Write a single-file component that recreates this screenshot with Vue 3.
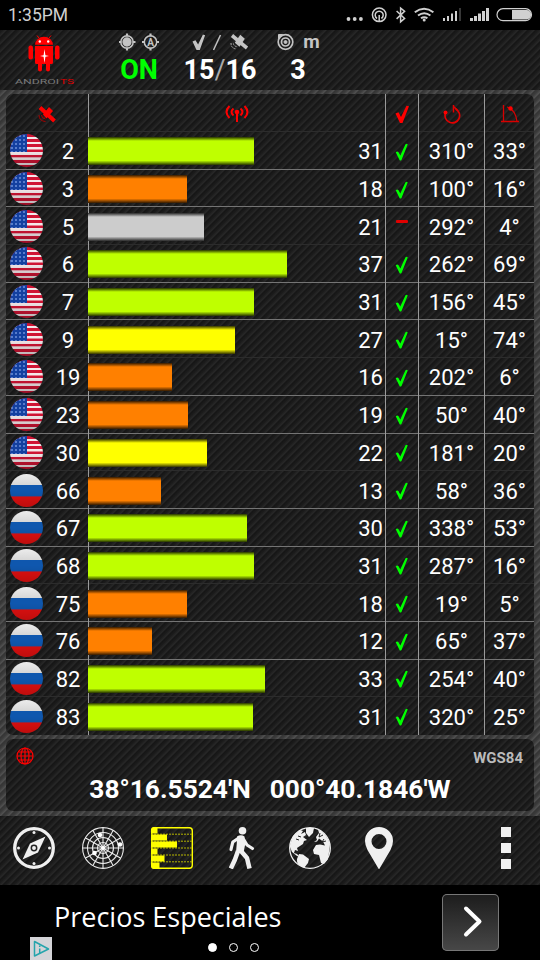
<template>
  <div class="screen">
    <div class="status">
      <span class="time">1:35PM</span>
      <svg width="195" height="30" viewBox="345 0 195 30">
        <g fill="#d0d0d0">
          <circle cx="348.5" cy="19" r="1.9" />
          <circle cx="354.7" cy="19" r="1.9" />
          <circle cx="360.9" cy="19" r="1.9" />
        </g>
        <g fill="none" stroke="#d0d0d0" stroke-width="1.5">
          <circle cx="379.2" cy="14.8" r="6.8" />
          <path d="M377 18.5a4 4 0 1 1 4.4 0M379.2 15v7" />
          <path d="M396.6 11l8 7.4-4 3.4V8l4 3.3-8 7.6" />
        </g>
        <g fill="none" stroke="#d0d0d0" stroke-width="2">
          <path d="M414.8 12.3q9.3-7 18.6 0M418 15.5q6.2-4.6 12.4 0M421 18.3q3.2-2.3 6.4 0" />
        </g>
        <circle cx="424.2" cy="20" r="1.5" fill="#d0d0d0" />
        <g fill="#d0d0d0">
          <rect x="443" y="18" width="2" height="3" />
          <rect x="447" y="16" width="2" height="5" />
          <rect x="451" y="13.5" width="2" height="7.5" />
          <rect x="455" y="11" width="2" height="10" />
          <rect x="459" y="8" width="2" height="13" fill="#383838" />
          <rect x="470" y="18" width="3" height="3" />
          <rect x="474" y="16" width="3" height="5" />
          <rect x="478" y="13.5" width="3" height="7.5" />
          <rect x="482" y="11" width="3" height="10" />
          <rect x="486" y="8" width="3" height="13" />
          <path d="M512 10h14.5a4.7 4.7 0 0 1 0 9.4H512z" />
        </g>
        <rect x="497" y="8.7" width="34.5" height="12" rx="6" fill="none" stroke="#d0d0d0" stroke-width="1.2" />
      </svg>
    </div>

    <div class="header texture">
      <svg width="62" height="54" viewBox="14 33 62 54">
        <g fill="#f00">
          <path d="M35 44.8a9 8 0 0 1 18 0z" />
          <path d="M39 38l-2-2.5M49 38l2-2.5" stroke="#f00" />
          <path d="M35 46h18v16.5a1.5 1.5 0 0 1-1.5 1.5H50v5.5a2 2 0 0 1-4 0V64h-4v5.5a2 2 0 0 1-4 0V64h-1.5a1.5 1.5 0 0 1-1.5-1.5z" />
          <rect x="28.5" y="45.5" width="4.5" height="14" rx="2" />
          <rect x="55" y="45.5" width="4.5" height="14" rx="2" />
        </g>
        <g fill="#fff">
          <circle cx="39.8" cy="41.5" r="1.2" />
          <circle cx="48.2" cy="41.5" r="1.2" />
          <path d="M44.5 49l.9 6.200 3.600.8-3.600.8-.9 6.200-.9-6.200-3.600-.8 3.600-.8z" />
        </g>
        <text x="15" y="83.5" class="brand" textLength="44" lengthAdjust="spacingAndGlyphs">ANDROI</text>
        <text x="60" y="83.5" class="brand red" textLength="14" lengthAdjust="spacingAndGlyphs">TS</text>
      </svg>
      <div class="stat stat-on">
        <div class="stat-icons">
          <svg width="40" height="18" viewBox="119 33 40 18" fill="none" stroke="#c4c4c4" stroke-width="1.5">
            <circle cx="127" cy="42" r="6.2" />
            <circle cx="127" cy="42" r="3.9" fill="#c4c4c4" />
            <path d="M127 33.5v3M127 47.5v3M118.9 42h2.5M132.5 42h3" stroke-width="2.2" />
            <circle cx="150.5" cy="42" r="6.2" />
            <path d="M150.5 33.5v3M150.5 47.5v3M142 42h3M156 42h3" stroke-width="2.2" />
            <text x="150.5" y="45.5" class="auto">A</text>
          </svg>
        </div>
        <div class="value green">ON</div>
      </div>
      <div class="stat stat-count">
        <div class="stat-icons">
          <svg width="56" height="18" viewBox="192 33 56 18">
            <path d="M192.5 41.5l3-1.3 2.6 4.3 4.8-10 2.2.7-5.3 14.8h-3.3z" fill="#c4c4c4" />
            <path d="M213.5 50l7-15" stroke="#c4c4c4" stroke-width="1.5" />
            <path d="M232 35.5l15 12.5" stroke="#c4c4c4" stroke-width="3.6" />
            <path d="M234.8 42.7l5.5-8 4.5 4-5.3 8z" fill="#c4c4c4" />
            <path d="M231 43q0 5.5 5.5 6M233.5 43.5q0 2.5 3 3" fill="none" stroke="#aaa" stroke-dasharray="2 1" />
          </svg>
        </div>
        <div class="value">15<i>/</i>16</div>
      </div>
      <div class="stat stat-accuracy">
        <div class="stat-icons">
          <svg width="18" height="18" viewBox="276 33 18 18" fill="none" stroke="#c4c4c4">
            <circle cx="285.5" cy="42" r="7.3" stroke-width="1.7" />
            <circle cx="285.5" cy="42" r="4" stroke-width="1.7" />
            <circle cx="285.5" cy="42" r="1.5" fill="#c4c4c4" />
            <path d="M278.5 34.5h4l-4 4z" fill="#c4c4c4" />
          </svg>
          <b>m</b>
        </div>
        <div class="value">3</div>
      </div>
    </div>

    <div class="main">
      <div class="table texture">
        <div class="row head">
          <div class="cell sat">
            <svg width="18" height="18" viewBox="0 0 18 18">
              <path d="M2 2.5L16.5 16" stroke="#f00" stroke-width="4" />
              <path d="M5 9.500l6-7.500 4 4-6.500 7.500z" fill="#f00" />
              <path d="M1 10q0 6 6.5 6.5M3.500 10q0 3.500 4 4" fill="none" stroke="#a00" />
            </svg>
          </div>
          <div class="cell signal center">
            <svg width="24" height="18" viewBox="0 0 24 18" fill="none" stroke="#f00" stroke-width="2">
              <path d="M4.500 1q-6 6 0 12M8.500 3.500q-4 3.500 0 7M15.500 3.500q4 3.500 0 7M19.500 1q6 6 0 12" />
              <path d="M12 7v10" />
              <circle cx="12" cy="7" r="1.3" fill="#f00" />
            </svg>
          </div>
          <div class="cell used">
            <svg width="14" height="19" viewBox="0 0 14 19"><path d="M.5 8.500l3-1.200L6 12 11.500.7l2.500.5L7.500 18H5z" fill="#f00" /></svg>
          </div>
          <div class="cell azimuth">
            <svg width="20" height="20" viewBox="0 0 20 20" fill="none" stroke="#e20000" stroke-width="1.7">
              <path d="M3.500 9a7.300 7.300 0 1 0 10-4" />
              <path d="M11.500 1v7.500M11.500 2.500l4 3.500" stroke-width="1.5" />
              <circle cx="3.500" cy="8.500" r="2" fill="#f00" stroke="none" />
            </svg>
          </div>
          <div class="cell elevation">
            <svg width="20" height="20" viewBox="0 0 20 20" fill="none" stroke="#d80000" stroke-width="1.3">
              <path d="M3.500 1v17M1 17.500h18M7 3q8.500 2.500 10 14.500" />
              <circle cx="10.500" cy="4.500" r="2.200" fill="#f00" stroke="none" />
            </svg>
          </div>
        </div>
        <div class="row" v-for="s in satellites" :key="s.id">
          <div class="cell sat">
            <span class="flag" :class="s.id < 65 ? 'usa' : 'russia'"></span>
            <span class="id">{{ s.id }}</span>
          </div>
          <div class="cell signal">
            <div class="bar" :class="s.color" :style="{ width: s.width + 'px' }"></div>
            <span class="snr">{{ s.snr }}</span>
          </div>
          <div class="cell used">
            <span v-if="s.color === 'gray'" class="dash"></span>
            <svg v-else class="tick" width="13" height="18" viewBox="0 0 13 18"><path d="M.7 9.300q1.500-1.600 2.700-.3L5.300 12.500 10.500 1.200q1.500-1.200 2.200.2L6.500 17q-1.200 1-2 0z" fill="#0f0" /></svg>
          </div>
          <div class="cell azimuth">{{ s.az }}°</div>
          <div class="cell elevation">{{ s.el }}°</div>
        </div>
      </div>

      <div class="position texture">
        <div class="position-top">
          <svg width="18" height="18" viewBox="0 0 18 18" fill="none" stroke="#f00" stroke-width="1.2">
            <circle cx="9" cy="9" r="8" />
            <ellipse cx="9" cy="9" rx="4" ry="8" />
            <path d="M9 1v16M1 9h16M2.500 5h13M2.500 13h13" />
          </svg>
          <span>WGS84</span>
        </div>
        <div class="coords"><span>38°16.5524'N</span><span>000°40.1846'W</span></div>
      </div>
    </div>

    <div class="toolbar texture">
      <svg width="42" height="42" viewBox="0 0 42 42">
        <circle cx="21" cy="21" r="19.3" fill="none" stroke="#f0f0f0" stroke-width="3.3" />
        <path d="M32.500 9.500L25 25.500 9.500 32.500 17 16.500z" fill="#f0f0f0" />
        <circle cx="21" cy="21" r="2.7" fill="#f0f0f0" stroke="#222" stroke-width="1.5" />
        <g fill="#f0f0f0">
          <circle cx="21" cy="5.5" r="1.5" />
          <circle cx="21" cy="36.5" r="1.5" />
          <circle cx="5.5" cy="21" r="1.5" />
          <circle cx="36.5" cy="21" r="1.5" />
        </g>
      </svg>
      <svg width="42" height="42" viewBox="0 0 42 42" fill="none" stroke="#ececec" stroke-width="1.1">
        <circle cx="21" cy="21" r="20.4" />
        <circle cx="21" cy="21" r="15.5" />
        <circle cx="21" cy="21" r="10.5" />
        <circle cx="21" cy="21" r="5.5" />
        <path v-for="a in [0, 30, 60, 90, 120, 150]" :key="a" d="M21 .5v41" :transform="`rotate(${a} 21 21)`" />
        <g fill="#fff" stroke="none">
          <circle cx="18" cy="8" r="2.3" />
          <circle cx="38" cy="17.5" r="2.3" />
          <circle cx="12.5" cy="26" r="2.3" />
          <circle cx="21" cy="21" r="2" />
        </g>
      </svg>
      <svg width="42" height="42" viewBox="0 0 42 42">
        <rect x=".7" y=".7" width="40.6" height="40.6" rx="3" fill="none" stroke="#ff0" stroke-width="1.4" />
        <path d="M0 7.200h41M0 14.200h41M0 21h41M0 28h41M0 34.800h41" stroke="#b4b400" stroke-dasharray="2 1" />
        <g fill="#ff0">
          <path d="M0 3q0-3 3-3h3.500v6.500H0z" />
          <rect y="7.5" width="16" height="6" />
          <rect y="14.5" width="26" height="6" />
          <rect y="21.5" width="6.500" height="6" />
          <rect y="28.5" width="13.5" height="6" />
          <path d="M0 35.500h8.500V42H3q-3 0-3-3z" />
        </g>
      </svg>
      <svg width="42" height="42" viewBox="0 0 42 42">
        <g fill="none" stroke="#f0f0f0" stroke-linejoin="round">
          <path d="M18 11.500L12.800 15 11 22.500M24 13l3 5 5.500 3.500" stroke-width="3.2" stroke-linecap="round" />
          <path d="M18 24l-3.200 9-4 8.500M21 24l6 7 2.500 10.500" stroke-width="4.5" />
        </g>
        <path d="M17 9.500q4-2.500 7.500 0L25.500 16l-2 9.500h-7.500l1-12z" fill="#f0f0f0" />
        <circle cx="22.5" cy="3.8" r="3.8" fill="#f0f0f0" />
      </svg>
      <svg width="42" height="42" viewBox="0 0 42 42">
        <circle cx="21" cy="21" r="20.3" fill="none" stroke="#f0f0f0" stroke-width="1.3" />
        <g fill="#f0f0f0">
          <path d="M1 18L4 9 11 3l3 1-2 3 4-2 1 3-3 2 4 3-3 1-1 3-3 2-3 2 1 3-3-1-1 3 3 1 3 3-3-1-5-4-2-5z" />
          <path d="M17 1h8l-1 5-4 4-3-4z" />
          <path d="M10 27l4 .5 6 4.500-1 4-4 5Q7 38 8 32z" />
          <path d="M28 13l-1-3 3-4-1-4q9 5 12 15l-1 8-1 7-4 5-3-1-2-8-5-1-1-4 3-5 4-.5 5 1-2-4-4-3-2 3-3 .5z" />
        </g>
        <path d="M31 6l-1 4 4-2M35 12l-2 3 4-1M7 12l3 1M12 10l-3-1" fill="none" stroke="#222" />
      </svg>
      <svg width="42" height="42" viewBox="0 0 42 42">
        <path d="M21 0a14 14 0 0 1 14 14q0 4-2.500 9L21 42.500 9.500 23Q7 18 7 14A14 14 0 0 1 21 0zm0 7a7.500 7.500 0 1 0 0 15 7.500 7.500 0 0 0 0-15z" fill="#f0f0f0" />
      </svg>
      <div class="more"><span></span><span></span><span></span></div>
    </div>

    <div class="ad">
      <svg class="choices" width="22" height="23" viewBox="0 0 22 23">
        <rect width="22" height="23" fill="#d4d4d8" />
        <path d="M4.500 4.500v14.500L18.500 12z" fill="none" stroke="#25a4ac" stroke-width="1.5" stroke-linejoin="round" />
        <path d="M9.700 8.500v1.500M9.700 11.500v5" stroke="#25a4ac" stroke-width="1.5" />
      </svg>
      <div class="ad-body">
        <div class="ad-title">Precios Especiales</div>
        <div class="dots"><span class="on"></span><span></span><span></span></div>
      </div>
      <div class="ad-next">
        <svg width="57" height="57" viewBox="0 0 57 57"><path d="M24 14.500L37.500 27.500 24 40.500" fill="none" stroke="#fff" stroke-width="4" stroke-linecap="round" stroke-linejoin="round" /></svg>
      </div>
    </div>
  </div>
</template>

<script setup>
const satellites = [
  { id: 2, snr: 31, width: 166, color: "lime", az: 310, el: 33 },
  { id: 3, snr: 18, width: 99, color: "orange", az: 100, el: 16 },
  { id: 5, snr: 21, width: 116, color: "gray", az: 292, el: 4 },
  { id: 6, snr: 37, width: 199, color: "lime", az: 262, el: 69 },
  { id: 7, snr: 31, width: 166, color: "lime", az: 156, el: 45 },
  { id: 9, snr: 27, width: 147, color: "yellow", az: 15, el: 74 },
  { id: 19, snr: 16, width: 84, color: "orange", az: 202, el: 6 },
  { id: 23, snr: 19, width: 100, color: "orange", az: 50, el: 40 },
  { id: 30, snr: 22, width: 119, color: "yellow", az: 181, el: 20 },
  { id: 66, snr: 13, width: 73, color: "orange", az: 58, el: 36 },
  { id: 67, snr: 30, width: 159, color: "lime", az: 338, el: 53 },
  { id: 68, snr: 31, width: 166, color: "lime", az: 287, el: 16 },
  { id: 75, snr: 18, width: 99, color: "orange", az: 19, el: 5 },
  { id: 76, snr: 12, width: 64, color: "orange", az: 65, el: 37 },
  { id: 82, snr: 33, width: 177, color: "lime", az: 254, el: 40 },
  { id: 83, snr: 31, width: 165, color: "lime", az: 320, el: 25 },
];
</script>

<style>
body {
  margin: 0;
  background: #000;
}
</style>

<style scoped>
* {
  box-sizing: border-box;
}

svg {
  display: block;
  flex: none;
}

.screen {
  width: 540px;
  height: 960px;
  overflow: hidden;
  display: flex;
  flex-direction: column;
  background: #000;
  color: #fff;
  font-family: Roboto, sans-serif;
}

.texture {
  background: repeating-linear-gradient(135deg, #161616 0, #1b1b1b 2px, #272727 4.2px, #161616 5.657px);
}

.status {
  height: 30px;
  display: flex;
  justify-content: space-between;
  padding-left: 8px;
}

.time {
  font-size: 17.5px;
  line-height: 31px;
  color: #d0d0d0;
}

.header {
  height: 60px;
  display: flex;
  padding: 3px 0 0 14px;
}

.brand {
  font-size: 8px;
  fill: #777;
}

.brand.red {
  fill: #d00;
}

.auto {
  font-size: 10px;
  font-weight: bold;
  fill: #c4c4c4;
  stroke: none;
  text-anchor: middle;
}

.stat {
  display: flex;
  flex-direction: column;
  align-items: center;
}

.stat-on {
  width: 60px;
  margin-left: 33px;
}

.stat-count {
  width: 80px;
  margin-left: 11px;
}

.stat-accuracy {
  width: 60px;
  margin-left: 8px;
}

.stat-icons {
  height: 18px;
  display: flex;
  gap: 9px;
}

.stat-icons b {
  font-size: 19px;
  line-height: 17px;
  color: #c4c4c4;
}

.value {
  font-size: 27px;
  font-weight: bold;
  line-height: 38px;
}

.value i {
  font-style: normal;
  font-weight: normal;
  color: #aaa;
}

.green {
  color: #0f0;
}

.main {
  height: 726px;
  padding: 4px 6px 5px;
  display: flex;
  flex-direction: column;
  gap: 4px;
  background: repeating-linear-gradient(135deg, #353535 0, #3b3b3b 2px, #505050 4.2px, #353535 5.657px);
}

.table {
  height: 641px;
  border-radius: 7px;
  overflow: hidden;
}

.row {
  display: flex;
  height: 37.69px;
  font-size: 22px;
  border-bottom: 1px solid #747474;
}

.row.head {
  height: 38px;
}

/* every third divider is drawn dim */
.row:nth-child(3n + 1) {
  border-bottom-color: #2c2c2c;
}

.row:last-child {
  border-bottom-color: transparent;
}

.cell {
  display: flex;
  align-items: center;
  justify-content: center;
  padding-top: 2px;
  margin-bottom: -1px;
}

.cell + .cell {
  border-left: 1px solid #9a9a9a;
}

.sat {
  width: 82px;
}

.signal {
  width: 297px;
  justify-content: space-between;
  padding-right: 2.5px;
}

.signal.center {
  justify-content: center;
  padding-right: 0;
}

.used {
  width: 33px;
}

.azimuth {
  width: 66px;
}

.elevation {
  width: 50px;
}

.row:not(.head) .sat {
  justify-content: flex-start;
  padding-left: 4px;
}

.flag {
  width: 33px;
  height: 33px;
  flex: none;
  border-radius: 50%;
  margin-top: -2px;
}

.usa {
  background:
    linear-gradient(transparent 50%, rgba(0, 0, 0, 0.25)),
    repeating-linear-gradient(#d01434 0, #d01434 2.5px, #f4e8ea 2.8px, #f4e8ea 5px, #d01434 5.2px);
  overflow: hidden;
}

.usa::before {
  content: "";
  display: block;
  width: 17px;
  height: 18px;
  background: radial-gradient(circle, #8cacf0 0.4px, #1440a0 1.1px) 0 0 / 4px 4px;
}

.russia {
  background:
    linear-gradient(transparent 50%, rgba(0, 0, 0, 0.15)),
    linear-gradient(#ececec, #d8d8d8 32%, #0f57ae 34%, #0f57ae 67%, #e01010 69%);
}

.id {
  width: 40px;
  margin-left: 5px;
  text-align: center;
}

.snr {
  letter-spacing: -0.3px;
}

.bar {
  height: 28px;
  margin-top: -1px;
  margin-left: -1px;
}

.lime {
  background: linear-gradient(#263300, #bfff00 14%, #bfff00 84%, #263300);
}

.orange {
  background: linear-gradient(#331a00, #ff8000 14%, #ff8000 84%, #331a00);
}

.yellow {
  background: linear-gradient(#333300, #ff0 14%, #ff0 84%, #333300);
}

.gray {
  background: linear-gradient(#292929, #ccc 14%, #ccc 84%, #292929);
}

.tick {
  margin: 0 1px 0 0;
}

.dash {
  width: 12px;
  height: 3px;
  border-radius: 1px;
  background: #e00000;
  margin-bottom: 11px;
}

.position {
  height: 72px;
  border-radius: 7px;
}

.position-top {
  height: 34px;
  display: flex;
  justify-content: space-between;
  padding: 8px 11px 0 10px;
  font-size: 15px;
  font-weight: bold;
  line-height: 22px;
  color: #bbb;
}

.coords {
  display: flex;
  justify-content: center;
  gap: 19px;
  font-size: 26.3px;
  font-weight: bold;
  line-height: 32px;
}

.toolbar {
  height: 69px;
  display: flex;
  gap: 27px;
  padding: 11px 29px 0 13px;
}

.more {
  margin-left: auto;
  display: flex;
  flex-direction: column;
  gap: 6px;
}

.more span {
  width: 10px;
  height: 10px;
  background: #f0f0f0;
}

.ad {
  height: 75px;
  display: flex;
  padding-left: 30px;
}

.choices {
  margin-top: 52px;
}

.ad-body {
  width: 390px;
  padding-top: 14px;
}

.ad-title {
  margin-left: 2px;
  font-family: "Open Sans", sans-serif;
  font-size: 27px;
  line-height: 36px;
}

.dots {
  display: flex;
  gap: 12px;
  margin: 8px 0 0 156px;
}

.dots span {
  width: 9px;
  height: 9px;
  border: 1.5px solid #fff;
  border-radius: 50%;
}

.dots .on {
  background: #fff;
}

.ad-next {
  width: 57px;
  height: 57px;
  margin-top: 9px;
  border-radius: 5px;
  background: linear-gradient(#1c1c1c, #484848);
  box-shadow: inset 0 0 0 1px #777;
}
</style>
